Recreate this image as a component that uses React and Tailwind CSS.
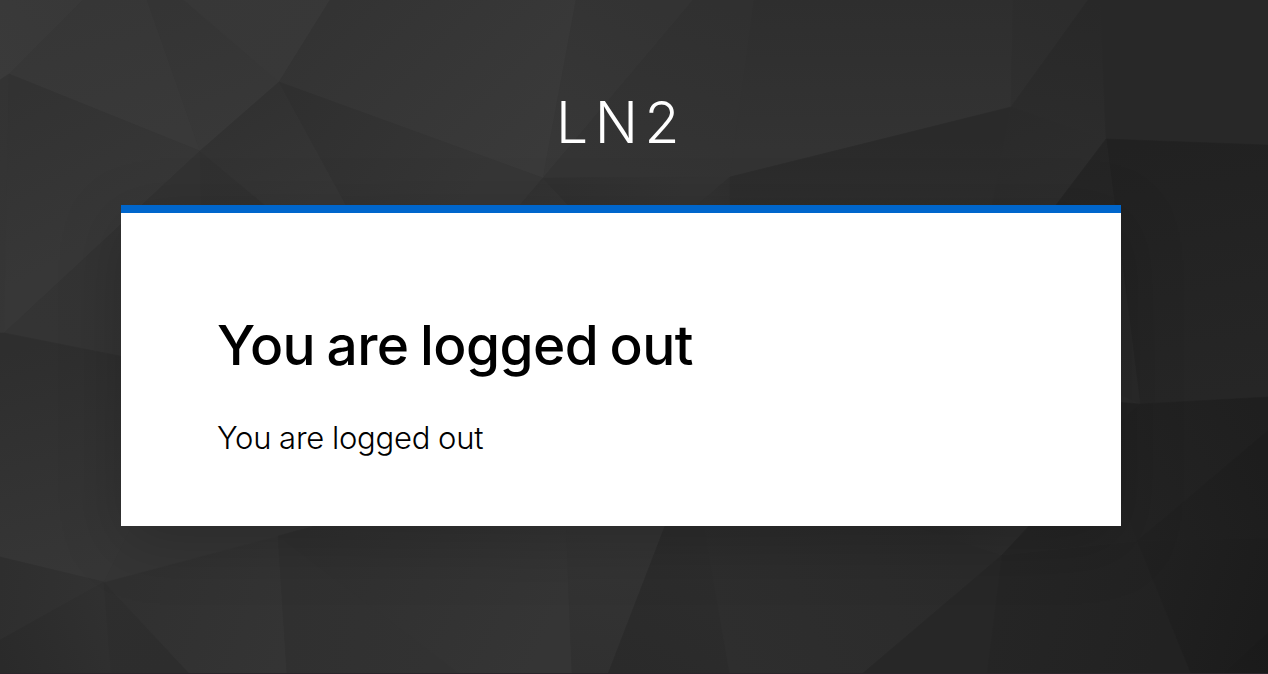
// Each facet: outline, then the two ends (x, y, colour) of its shading.
const FACETS = [
  ['0,0 83,0 9,74 0,80', 0, 80, '#3a3a3a', 83, 0, '#383838'],
  ['83,0 147,0 200,151 9,74', 100, 0, '#363636', 140, 140, '#393939'],
  ['147,0 184,0 279,82 200,151', 170, 0, '#343434', 220, 140, '#383838'],
  ['184,0 330,0 279,82', 190, 0, '#373737', 279, 82, '#383838'],
  ['330,0 576,0 543,178 279,82', 340, 0, '#333333', 520, 178, '#3a3a3a'],
  ['576,0 693,0 543,178', 640, 0, '#333333', 543, 178, '#383838'],
  ['693,0 754,0 730,177 543,178', 700, 0, '#303030', 650, 178, '#343434'],
  ['754,0 1013,0 1011,107 730,177', 860, 0, '#2e2e2e', 860, 150, '#333333'],
  ['1013,0 1088,0 1011,107', 1050, 0, '#2c2c2c', 1011, 107, '#2f2f2f'],
  ['1088,0 1100,0 1106,139 1011,107', 1080, 0, '#282828', 1060, 139, '#2c2c2c'],
  ['1100,0 1268,0 1268,145 1106,139', 1100, 0, '#282828', 1268, 145, '#282828'],
  ['1106,139 1268,145 1268,397 1140,404', 1160, 140, '#212121', 1200, 400, '#262626'],
  ['0,80 9,74 4,333 0,333', 0, 80, '#333333', 0, 333, '#363636'],
  ['9,74 200,151 4,333', 20, 90, '#323232', 100, 240, '#373737'],
  ['200,151 203,205 203,400 4,333', 160, 180, '#323232', 60, 340, '#343434'],
  ['200,151 265,205 265,300 203,300', 200, 151, '#303030', 250, 215, '#313131'],
  ['200,151 279,82 346,205 346,300 265,300 265,205', 240, 110, '#313131', 300, 210, '#363636'],
  ['279,82 543,178 520,205 520,300 346,300 346,205', 290, 90, '#2f2f2f', 460, 210, '#363636'],
  ['543,178 568,205 568,300 520,300 520,205', 530, 180, '#313131', 540, 210, '#343434'],
  ['543,178 730,177 697,205 697,300 568,300 568,205', 560, 178, '#303030', 680, 205, '#333333'],
  ['730,177 731,300 697,300 697,205', 730, 177, '#2f2f2f', 710, 205, '#323232'],
  ['730,177 1011,107 992,205 992,300 731,300', 860, 140, '#2a2a2a', 860, 210, '#2e2e2e'],
  ['1011,107 1106,139 1056,205 1056,300 992,300 992,205', 1011, 107, '#2a2a2a', 1050, 205, '#2d2d2d'],
  ['1106,139 1140,404 1100,385 1056,300 1056,205', 1106, 139, '#242424', 1130, 390, '#2a2a2a'],
  ['4,333 130,358 260,400 132,526 104,582 0,557 0,333', 30, 345, '#2e2e2e', 90, 570, '#363636'],
  ['0,557 104,582 0,640', 0, 570, '#2e2e2e', 104, 582, '#323232'],
  ['0,640 104,582 111,674 0,674', 0, 660, '#2a2a2a', 111, 620, '#303030'],
  ['104,582 190,674 111,674', 104, 582, '#2e2e2e', 150, 674, '#2d2d2d'],
  ['104,582 278,536 287,674 190,674', 120, 600, '#303030', 285, 650, '#343434'],
  ['104,582 132,526 160,450 400,450 315,526 278,536', 110, 580, '#353535', 278, 536, '#353535'],
  ['278,536 460,674 287,674', 285, 650, '#303030', 430, 660, '#323232'],
  ['278,536 315,526 400,450 563,450 572,674 460,674', 300, 540, '#2f2f2f', 540, 650, '#353535'],
  ['563,450 695,450 665,526 608,674 572,674', 620, 540, '#343434', 590, 674, '#303030'],
  ['665,526 695,450 704,526 730,674 608,674', 690, 540, '#2d2d2d', 620, 674, '#2a2a2a'],
  ['695,450 870,450 912,526 1002,555 862,674 730,674 704,526', 730, 660, '#2e2e2e', 960, 560, '#2b2b2b'],
  ['870,450 1090,450 1029,526 1002,555 912,526', 920, 526, '#2a2a2a', 1002, 555, '#2d2d2d'],
  ['1002,555 987,674 862,674', 870, 670, '#272727', 1002, 600, '#272727'],
  ['1002,555 1137,541 1191,674 987,674', 1000, 600, '#252525', 1160, 640, '#222222'],
  ['1002,555 1029,526 1090,400 1140,404 1160,524 1137,541', 1030, 540, '#262626', 1140, 480, '#232323'],
  ['1140,404 1268,397 1268,430 1137,541 1100,440', 1130, 500, '#232323', 1260, 410, '#1f1f1f'],
  ['1268,430 1268,538 1137,541', 1150, 530, '#212121', 1268, 470, '#1d1d1d'],
  ['1137,541 1268,538 1268,632 1222,674 1191,674', 1140, 550, '#212121', 1268, 590, '#1c1c1c'],
  ['1268,632 1268,674 1222,674', 1222, 674, '#1c1c1c', 1268, 640, '#1a1a1a'],
];

function Backdrop() {
  return (
    <svg
      className="absolute inset-0 h-full w-full"
      viewBox="0 0 1268 674"
      preserveAspectRatio="none"
      aria-hidden="true"
    >
      <defs>
        {FACETS.map(([, x1, y1, from, x2, y2, to], i) => (
          <linearGradient key={i} id={`facet-${i}`} gradientUnits="userSpaceOnUse" x1={x1} y1={y1} x2={x2} y2={y2}>
            <stop offset="0" stopColor={from} />
            <stop offset="1" stopColor={to} />
          </linearGradient>
        ))}
      </defs>
      {FACETS.map(([points], i) => (
        <polygon key={i} points={points} fill={`url(#facet-${i})`} stroke={`url(#facet-${i})`} strokeWidth="0.6" />
      ))}
      <path d="M0 673.5H1268" stroke="#2b252b" />
    </svg>
  );
}

export default function App() {
  return (
    <div className="relative h-screen w-full overflow-hidden bg-[#2c2c2c]">
      <Backdrop />
      <div className="relative ml-[121px] flex w-[1000px] flex-col">
        <header className="flex h-[205px] justify-center pt-[83px]">
          <div className="font-[Inter,sans-serif] text-[57px] leading-[80px] font-[350] tracking-[6.5px] whitespace-nowrap text-white">
            LN2
          </div>
        </header>
        <main className="flex h-[321px] flex-col items-start border-t-8 border-[#0066cc] bg-white pt-[96px] pl-[96px] font-[Inter,sans-serif] text-black shadow-[0_16px_60px_rgba(0,0,0,0.2)]">
          <h1 className="text-[55px] leading-[73px] font-[490] tracking-[-0.6px] [word-spacing:-2.5px] whitespace-nowrap">
            You are logged out
          </h1>
          <p className="mt-[32px] text-[31px] leading-[48px] font-[330] tracking-[-0.25px] [word-spacing:-0.5px] whitespace-nowrap">You are logged out</p>
        </main>
      </div>
    </div>
  );
}
